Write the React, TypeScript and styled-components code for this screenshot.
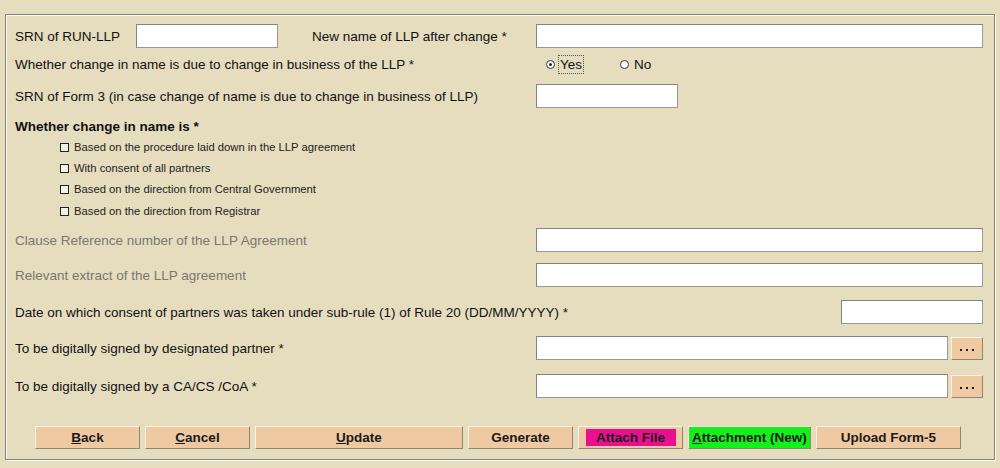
import React from "react";
import styled, { createGlobalStyle } from "styled-components";

const GlobalStyle = createGlobalStyle`
    html, body {
        margin: 0;
        padding: 0;
        background: #e6ddbf;
    }
    body {
        font-family: "Liberation Sans", Arial, sans-serif;
        color: #111;
    }
`;

const Page = styled.div`
    width: 1000px;
    height: 468px;
    padding: 14px 5px 0 5px;
    box-sizing: border-box;
`;

const Panel = styled.div`
    width: 990px;
    height: 446px;
    box-sizing: border-box;
    border: 1px solid #868275;
    box-shadow: inset 1px 1px 0 #fdfaf0, 1px 1px 0 #fdfaf0;
    padding: 9px 11px 0 9px;
    display: flex;
    flex-direction: column;
`;

const Row = styled.div<{ $h?: number; $mt?: number }>`
    display: grid;
    grid-template-columns: minmax(0, 1fr) 447px;
    align-items: center;
    height: ${(p) => p.$h ?? 24}px;
    margin-top: ${(p) => p.$mt ?? 0}px;
`;

const Left = styled.div`
    display: flex;
    align-items: center;
`;

const Right = styled.div<{ $end?: boolean }>`
    display: flex;
    align-items: center;
    justify-content: ${(p) => (p.$end ? "flex-end" : "flex-start")};
    gap: 3px;
`;

const Label = styled.span<{ $grey?: boolean; $bold?: boolean; $w?: number; $ml?: number }>`
    font-size: 13.5px;
    color: ${(p) => (p.$grey ? "#7a776e" : "#111")};
    font-weight: ${(p) => (p.$bold ? "bold" : "normal")};
    width: ${(p) => (p.$w ? `${p.$w}px` : "auto")};
    margin-left: ${(p) => p.$ml ?? 0}px;
    white-space: nowrap;
`;

const TextBox = styled.div<{ $w?: number }>`
    height: 24px;
    box-sizing: border-box;
    width: ${(p) => (p.$w ? `${p.$w}px` : "auto")};
    flex: ${(p) => (p.$w ? "none" : "1")};
    background: #ffffff;
    border: 1px solid #9a978e;
    border-top-color: #858279;
    border-left-color: #858279;
`;

const DotsButton = styled.div`
    width: 32px;
    height: 23px;
    box-sizing: border-box;
    background: #eec9a1;
    border: 1px solid;
    border-color: #fbf1e4 #8f8577 #8f8577 #fbf1e4;
    display: flex;
    align-items: center;
    justify-content: center;
    gap: 4px;
    padding-top: 3px;
`;

const Dot = styled.span`
    width: 2px;
    height: 2px;
    background: #1a1a2a;
`;

const RadioGroup = styled.div`
    display: flex;
    align-items: center;
    padding-left: 10px;
`;

const Radio = styled.span<{ $checked?: boolean }>`
    width: 7px;
    height: 7px;
    border-radius: 50%;
    border: 1px solid #333;
    background: #fff;
    position: relative;
    margin-right: 3px;
    &::after {
        content: "";
        display: ${(p) => (p.$checked ? "block" : "none")};
        position: absolute;
        left: 2px;
        top: 2px;
        width: 3px;
        height: 3px;
        border-radius: 50%;
        background: #222;
    }
`;

const RadioText = styled.span<{ $focus?: boolean; $mr?: number }>`
    font-size: 13.5px;
    padding: 1px 1px;
    border: 1px dotted ${(p) => (p.$focus ? "#555" : "transparent")};
    margin-right: ${(p) => p.$mr ?? 0}px;
`;

const CheckRow = styled.div<{ $mt?: number }>`
    display: flex;
    align-items: center;
    height: 20px;
    margin-top: ${(p) => p.$mt ?? 0}px;
    padding-left: 45px;
`;

const CheckBox = styled.span`
    width: 7px;
    height: 7px;
    border: 1px solid #222;
    background: #f6f2e6;
    margin-right: 5px;
`;

const CheckText = styled.span`
    font-size: 11.25px;
    color: #222;
`;

const ButtonBar = styled.div`
    display: flex;
    gap: 5px;
    margin-top: 28px;
    padding-left: 20px;
`;

const Button = styled.div<{ $w: number; $fill?: string }>`
    width: ${(p) => p.$w}px;
    height: 23px;
    box-sizing: border-box;
    background: ${(p) => p.$fill ?? "#eec9a1"};
    border: 1px solid;
    border-color: #fbf1e4 #8f8577 #8f8577 #fbf1e4;
    display: flex;
    align-items: center;
    justify-content: center;
    font-size: 13.5px;
    font-weight: bold;
    color: #1a1a1a;
    u {
        text-decoration: underline;
    }
`;

const Highlight = styled.span<{ $fill: string }>`
    background: ${(p) => p.$fill};
    width: 90px;
    height: 17px;
    display: flex;
    align-items: center;
    justify-content: center;
`;

const Dots = () => (
    <DotsButton>
        <Dot />
        <Dot />
        <Dot />
    </DotsButton>
);

const App = () => {
    return (
        <Page>
            <GlobalStyle />
            <Panel>
                <Row>
                    <Left>
                        <Label $w={121}>SRN of RUN-LLP</Label>
                        <TextBox $w={142} />
                        <Label $ml={34}>New name of LLP after change *</Label>
                    </Left>
                    <Right>
                        <TextBox />
                    </Right>
                </Row>
                <Row $mt={4}>
                    <Label>Whether change in name is due to change in business of the LLP *</Label>
                    <RadioGroup>
                        <Radio $checked />
                        <RadioText $focus $mr={36}>Yes</RadioText>
                        <Radio />
                        <RadioText>No</RadioText>
                    </RadioGroup>
                </Row>
                <Row $mt={8}>
                    <Label>SRN of Form 3 (in case change of name is due to change in business of LLP)</Label>
                    <Right>
                        <TextBox $w={142} />
                    </Right>
                </Row>
                <Row $mt={8} $h={20}>
                    <Label $bold>Whether change in name is *</Label>
                </Row>
                <CheckRow $mt={1}>
                    <CheckBox />
                    <CheckText>Based on the procedure laid down in the LLP agreement</CheckText>
                </CheckRow>
                <CheckRow $mt={1}>
                    <CheckBox />
                    <CheckText>With consent of all partners</CheckText>
                </CheckRow>
                <CheckRow $mt={1}>
                    <CheckBox />
                    <CheckText>Based on the direction from Central Government</CheckText>
                </CheckRow>
                <CheckRow $mt={2}>
                    <CheckBox />
                    <CheckText>Based on the direction from Registrar</CheckText>
                </CheckRow>
                <Row $mt={7}>
                    <Label $grey>Clause Reference number of the LLP Agreement</Label>
                    <Right>
                        <TextBox />
                    </Right>
                </Row>
                <Row $mt={11}>
                    <Label $grey>Relevant extract of the LLP agreement</Label>
                    <Right>
                        <TextBox />
                    </Right>
                </Row>
                <Row $mt={13}>
                    <Label>Date on which consent of partners was taken under sub-rule (1) of Rule 20 (DD/MM/YYYY) *</Label>
                    <Right $end>
                        <TextBox $w={142} />
                    </Right>
                </Row>
                <Row $mt={12}>
                    <Label>To be digitally signed by designated partner *</Label>
                    <Right>
                        <TextBox />
                        <Dots />
                    </Right>
                </Row>
                <Row $mt={14}>
                    <Label>To be digitally signed by a CA/CS /CoA *</Label>
                    <Right>
                        <TextBox />
                        <Dots />
                    </Right>
                </Row>
                <ButtonBar>
                    <Button $w={105}><span><u>B</u>ack</span></Button>
                    <Button $w={105}><span><u>C</u>ancel</span></Button>
                    <Button $w={208}><span><u>U</u>pdate</span></Button>
                    <Button $w={105}>Generate</Button>
                    <Button $w={105}>
                        <Highlight $fill="#e8108e">Attach File</Highlight>
                    </Button>
                    <Button $w={123} $fill="#14f01a"><span><u>A</u>ttachment (New)</span></Button>
                    <Button $w={145}>Upload Form-5</Button>
                </ButtonBar>
            </Panel>
        </Page>
    );
};

export default App;
